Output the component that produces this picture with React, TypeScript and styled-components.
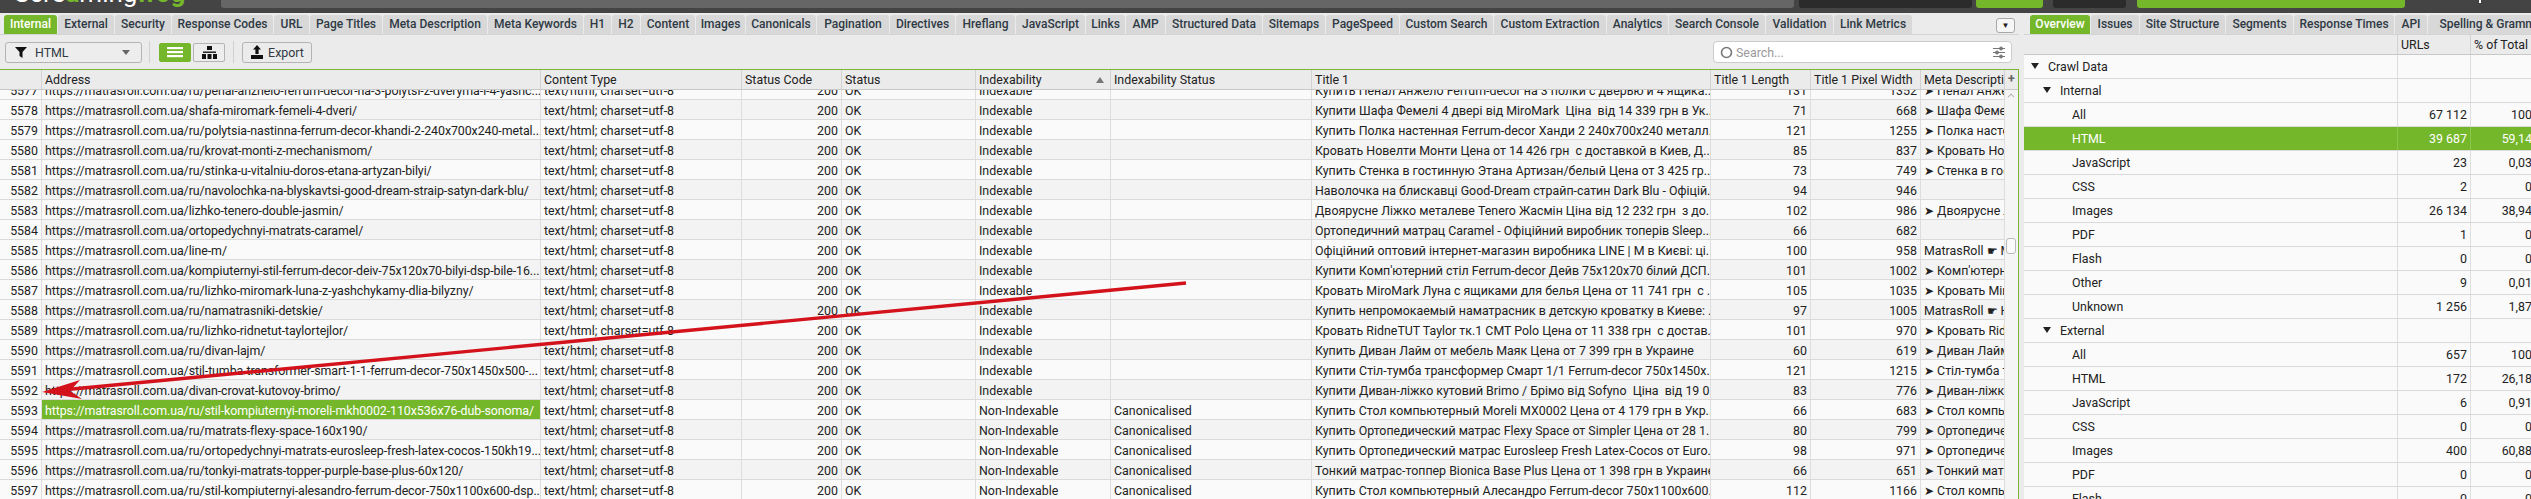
import styled, { createGlobalStyle } from "styled-components";

const GREEN = "#75b72a";
const BASE = "https://matrasroll.com.ua/";

const GlobalStyle = createGlobalStyle`
  html, body {
    margin: 0;
    padding: 0;
    background: #ebebeb;
  }
  * {
    box-sizing: border-box;
  }
`;

const Page = styled.div`
  position: relative;
  width: 2531px;
  height: 499px;
  overflow: hidden;
  font-family: Roboto, "Liberation Sans", sans-serif;
  font-size: 12.4px;
  color: #222;
  background: #ebebeb;
`;

const TopBar = styled.div`
  display: flex;
  height: 13px;
  background: #444;
  overflow: hidden;
`;

const Logo = styled.div`
  width: 221px;
  flex: none;
  padding-left: 14px;
  margin-top: -22px;
  font-size: 26px;
  line-height: 30px;
  font-weight: 400;
  color: #fff;
  white-space: nowrap;
  span {
    color: ${GREEN};
    font-weight: 700;
  }
`;

const Slab = styled.div<{ $w: number; $ml?: number; $color: string }>`
  width: ${({ $w }) => $w}px;
  margin-left: ${({ $ml }) => $ml ?? 0}px;
  height: 8px;
  flex: none;
  border-radius: 0 0 3px 3px;
  background: ${({ $color }) => $color};
`;

const Tick = styled.div`
  width: 2px;
  height: 3px;
  margin-left: 74px;
  background: #fff;
`;

const Main = styled.div`
  display: flex;
  height: 486px;
`;

const LeftPane = styled.div`
  width: 2019px;
  flex: none;
  display: flex;
  flex-direction: column;
`;

const RightPane = styled.div`
  margin-left: 5px;
  width: 507px;
  flex: none;
  display: flex;
  flex-direction: column;
  overflow: hidden;
`;

const TabStrip = styled.div<{ $pl: number }>`
  display: flex;
  align-items: flex-end;
  gap: 1px;
  height: 22px;
  padding-left: ${({ $pl }) => $pl}px;
  border-bottom: 1px solid #d4d4d4;
  white-space: nowrap;
  flex: none;
`;

const Tab = styled.div<{ $w: number; $active?: boolean }>`
  width: ${({ $w }) => $w}px;
  flex: none;
  height: 19px;
  line-height: 19px;
  text-align: center;
  font-size: 12px;
  font-weight: 500;
  border-radius: 3px 3px 0 0;
  overflow: hidden;
  color: ${({ $active }) => ($active ? "#fff" : "#2f3a44")};
  background: ${({ $active }) => ($active ? GREEN : "#d8d8d8")};
`;

const TabMenu = styled.div`
  position: absolute;
  left: 1996px;
  top: 18px;
  width: 19px;
  height: 15px;
  display: flex;
  align-items: center;
  justify-content: center;
  background: #f6f6f6;
  border: 1px solid #a8a8a8;
  border-radius: 3px;
  font-size: 8px;
`;

const Toolbar = styled.div`
  display: flex;
  align-items: center;
  height: 34px;
  padding: 0 7px 0 5px;
  flex: none;
`;

const Select = styled.div`
  display: flex;
  align-items: center;
  width: 137px;
  height: 21px;
  padding: 0 8px;
  gap: 7px;
  border: 1px solid #b4b4b4;
  border-radius: 3px;
  background: #ededed;
  color: #2f3a44;
`;

const Caret = styled.span`
  margin-left: auto;
  margin-right: 3px;
  width: 0;
  height: 0;
  border-left: 4px solid transparent;
  border-right: 4px solid transparent;
  border-top: 5px solid #666;
`;

const Divider = styled.div<{ $ml: number; $mr: number }>`
  width: 1px;
  height: 22px;
  background: #d0d0d0;
  margin: 0 ${({ $mr }) => $mr}px 0 ${({ $ml }) => $ml}px;
`;

const ViewButton = styled.div<{ $active?: boolean; $ml?: number }>`
  display: flex;
  align-items: center;
  justify-content: center;
  width: 32px;
  height: 19px;
  margin-left: ${({ $ml }) => $ml ?? 0}px;
  border-radius: 2px;
  background: ${({ $active }) => ($active ? GREEN : "#ededed")};
  border: 1px solid ${({ $active }) => ($active ? GREEN : "#b4b4b4")};
`;

const ExportButton = styled.div`
  display: flex;
  align-items: center;
  justify-content: center;
  gap: 4px;
  width: 70px;
  height: 21px;
  border: 1px solid #b4b4b4;
  border-radius: 3px;
  color: #2f3a44;
`;

const SearchBox = styled.div`
  margin-left: auto;
  display: flex;
  align-items: center;
  gap: 3px;
  width: 299px;
  height: 22px;
  padding: 0 6px;
  background: #fff;
  border: 1px solid #ccc;
  border-radius: 4px;
  color: #999;
  svg:last-child {
    margin-left: auto;
  }
`;

const TableFrame = styled.div`
  position: relative;
  flex: 1;
  min-height: 0;
  border-top: 1px solid #7ab536;
  border-right: 1px solid #7ab536;
  overflow: hidden;
`;

const HeaderRow = styled.div`
  position: relative;
  z-index: 1;
  display: flex;
  height: 20px;
  background: #ebebeb;
  border-bottom: 1px solid #c8c8c8;
`;

const HeaderCell = styled.div<{ $w: number }>`
  position: relative;
  width: ${({ $w }) => $w}px;
  flex: none;
  height: 19px;
  line-height: 20px;
  padding-left: 3px;
  overflow: hidden;
  white-space: nowrap;
  border-right: 1px solid #d2d2d2;
`;

const SortMark = styled.span`
  position: absolute;
  right: 6px;
  top: 7px;
  width: 0;
  height: 0;
  border-left: 4px solid transparent;
  border-right: 4px solid transparent;
  border-bottom: 6px solid #777;
`;

const AddColumn = styled.div`
  flex: 1;
  text-align: center;
  line-height: 17px;
  font-weight: 700;
  color: #666;
`;

const RowsClip = styled.div`
  height: 410px;
  overflow: hidden;
`;

const RowsScroll = styled.div`
  margin-top: -10px;
`;

const Row = styled.div<{ $even: boolean }>`
  display: flex;
  height: 20px;
  background: ${({ $even }) => ($even ? "#f3f3f3" : "#fafafa")};
  border-bottom: 1px solid #dadada;
`;

const Cell = styled.div<{ $w: number; $right?: boolean; $selected?: boolean; $plain?: boolean }>`
  width: ${({ $w }) => $w}px;
  flex: none;
  height: 19px;
  line-height: 21px;
  padding: 0 3px;
  overflow: hidden;
  white-space: pre;
  text-align: ${({ $right }) => ($right ? "right" : "left")};
  border-right: 1px solid #dedede;
  background: ${({ $selected, $plain }) =>
    $selected ? GREEN : $plain ? "#fafafa" : "transparent"};
  color: ${({ $selected }) => ($selected ? "#fff" : "inherit")};
`;

const AddressCell = styled(Cell)`
  letter-spacing: -0.08px;
`;

const ScrollTrack = styled.div`
  position: absolute;
  z-index: 2;
  left: 2005px;
  right: 0;
  top: 20px;
  bottom: 0;
  background: #f5f5f5;
`;

const ScrollUp = styled.div`
  position: absolute;
  left: 3px;
  top: 4px;
  width: 6px;
  height: 6px;
  border-left: 1px solid #aaa;
  border-top: 1px solid #aaa;
  transform: rotate(45deg) scale(0.8);
`;

const ScrollThumb = styled.div`
  position: absolute;
  left: 1px;
  top: 148px;
  width: 10px;
  height: 16px;
  background: #fbfbfb;
  border: 1px solid #bbb;
  border-radius: 3px;
`;

const TreeHeader = styled.div`
  display: flex;
  flex: none;
  height: 20px;
  background: #ebebeb;
  border-bottom: 1px solid #c8c8c8;
`;

const TreeHeadCell = styled.div<{ $w: number }>`
  width: ${({ $w }) => $w}px;
  flex: none;
  line-height: 20px;
  padding-left: 3px;
  white-space: nowrap;
  border-left: ${({ $w }) => ($w < 200 ? "1px solid #d2d2d2" : "none")};
`;

const TreeRow = styled.div<{ $selected?: boolean }>`
  display: flex;
  flex: none;
  height: 24px;
  background: ${({ $selected }) => ($selected ? GREEN : "#fafafa")};
  color: ${({ $selected }) => ($selected ? "#fff" : "inherit")};
  border-bottom: 1px solid #dadada;
`;

const TreeLabel = styled.div<{ $indent: number }>`
  display: flex;
  align-items: center;
  width: 373px;
  flex: none;
  padding-left: ${({ $indent }) => $indent}px;
  gap: 9px;
`;

const TreeArrow = styled.span`
  width: 0;
  height: 0;
  border-left: 4px solid transparent;
  border-right: 4px solid transparent;
  border-top: 6px solid #222;
  margin-bottom: 2px;
`;

const TreeValue = styled.div<{ $w: number; $selected?: boolean }>`
  width: ${({ $w }) => $w}px;
  flex: none;
  padding-right: 3px;
  line-height: 24px;
  text-align: right;
  border-left: 1px solid ${({ $selected }) => ($selected ? "#8cc54a" : "#dedede")};
`;

const RedArrow = styled.svg`
  position: absolute;
  left: 0;
  top: 0;
  pointer-events: none;
  z-index: 5;
`;

const mainTabs: [string, number][] = [
  ["Internal", 53], ["External", 56], ["Security", 56], ["Response Codes", 101], ["URL", 35],
  ["Page Titles", 72], ["Meta Description", 104], ["Meta Keywords", 95], ["H1", 27], ["H2", 28],
  ["Content", 54], ["Images", 49], ["Canonicals", 70], ["Pagination", 72], ["Directives", 65],
  ["Hreflang", 59], ["JavaScript", 69], ["Links", 39], ["AMP", 39], ["Structured Data", 96],
  ["Sitemaps", 62], ["PageSpeed", 73], ["Custom Search", 93], ["Custom Extraction", 112],
  ["Analytics", 61], ["Search Console", 96], ["Validation", 67], ["Link Metrics", 78],
];

const sideTabs: [string, number][] = [
  ["Overview", 60], ["Issues", 48], ["Site Structure", 85], ["Segments", 67],
  ["Response Times", 100], ["API", 32], ["Spelling & Grammar", 130],
];

const COLS = [42, 499, 201, 100, 134, 135, 201, 399, 100, 110, 84];
const HEADS = ["", "Address", "Content Type", "Status Code", "Status", "Indexability", "Indexability Status", "Title 1", "Title 1 Length", "Title 1 Pixel Width", "Meta Description 1"];

const D = "➤ ";
const T = "MatrasRoll ☛ ";
type Item = [string, string, number, number, string];

const items: Item[] = [
  ["ru/penal-anzhelo-ferrum-decor-na-3-polytsi-z-dveryma-i-4-yashc...", "Купить Пенал Анжело Ferrum-decor на 3 полки с дверью и 4 ящика...", 131, 1352, D + "Пенал Анжело"],
  ["shafa-miromark-femeli-4-dveri/", "Купити Шафа Фемелі 4 двері від MiroMark  Ціна  від 14 339 грн в Ук...", 71, 668, D + "Шафа Фемелі"],
  ["ru/polytsia-nastinna-ferrum-decor-khandi-2-240x700x240-metal...", "Купить Полка настенная Ferrum-decor Ханди 2 240x700x240 металл...", 121, 1255, D + "Полка настенная"],
  ["ru/krovat-monti-z-mechanismom/", "Кровать Новелти Монти Цена от 14 426 грн  с доставкой в Киев, Д...", 85, 837, D + "Кровать Новелти"],
  ["ru/stinka-u-vitalniu-doros-etana-artyzan-bilyi/", "Купить Стенка в гостинную Этана Артизан/белый Цена от 3 425 гр...", 73, 749, D + "Стенка в гостинную"],
  ["ru/navolochka-na-blyskavtsi-good-dream-straip-satyn-dark-blu/", "Наволочка на блискавці Good-Dream страйп-сатин Dark Blu - Офіцій...", 94, 946, ""],
  ["lizhko-tenero-double-jasmin/", "Двоярусне Ліжко металеве Tenero Жасмін Ціна від 12 232 грн  з до...", 102, 986, D + "Двоярусне Ліжко"],
  ["ortopedychnyi-matrats-caramel/", "Ортопедичний матрац Caramel - Офіційний виробник топерів Sleep...", 66, 682, ""],
  ["line-m/", "Офіційний оптовий інтернет-магазин виробника LINE | M в Києві: ці...", 100, 958, T + "Матраси"],
  ["kompiuternyi-stil-ferrum-decor-deiv-75x120x70-bilyi-dsp-bile-16...", "Купити Комп'ютерний стіл Ferrum-decor Дейв 75x120x70 білий ДСП...", 101, 1002, D + "Комп'ютерний"],
  ["ru/lizhko-miromark-luna-z-yashchykamy-dlia-bilyzny/", "Кровать MiroMark Луна с ящиками для белья Цена от 11 741 грн  с ...", 105, 1035, D + "Кровать MiroMark"],
  ["ru/namatrasniki-detskie/", "Купить непромокаемый наматрасник в детскую кроватку в Киеве: ...", 97, 1005, T + "Наматрасник"],
  ["ru/lizhko-ridnetut-taylortejlor/", "Кровать RidneTUT Taylor тк.1 CMT Polo Цена от 11 338 грн  с достав...", 101, 970, D + "Кровать RidneTUT"],
  ["ru/divan-lajm/", "Купить Диван Лайм от мебель Маяк Цена от 7 399 грн в Украине", 60, 619, D + "Диван Лайм"],
  ["stil-tumba-transformer-smart-1-1-ferrum-decor-750x1450x500-...", "Купити Стіл-тумба трансформер Смарт 1/1 Ferrum-decor 750x1450x...", 121, 1215, D + "Стіл-тумба трансформер"],
  ["divan-crovat-kutovoy-brimo/", "Купити Диван-ліжко кутовий Brimo / Брімо від Sofyno  Ціна  від 19 0...", 83, 776, D + "Диван-ліжко кутовий"],
  ["ru/stil-kompiuternyi-moreli-mkh0002-110x536x76-dub-sonoma/", "Купить Стол компьютерный Moreli MX0002 Цена от 4 179 грн в Укр...", 66, 683, D + "Стол компьютерный"],
  ["ru/matrats-flexy-space-160x190/", "Купить Ортопедический матрас Flexy Space от Simpler Цена от 28 1...", 80, 799, D + "Ортопедический"],
  ["ru/ortopedychnyi-matrats-eurosleep-fresh-latex-cocos-150kh19...", "Купить Ортопедический матрас Eurosleep Fresh Latex-Cocos от Euro...", 98, 971, D + "Ортопедический"],
  ["ru/tonkyi-matrats-topper-purple-base-plus-60x120/", "Тонкий матрас-топпер Bionica Base Plus Цена от 1 398 грн в Украине", 66, 651, D + "Тонкий матрас"],
  ["ru/stil-kompiuternyi-alesandro-ferrum-decor-750x1100x600-dsp...", "Купить Стол компьютерный Алесандро Ferrum-decor 750x1100x600...", 112, 1166, D + "Стол компьютерный"],
];

type TreeItem = { label: string; indent: number; arrow?: boolean; urls?: string; pct?: string; selected?: boolean };

const tree: TreeItem[] = [
  { label: "Crawl Data", indent: 7, arrow: true },
  { label: "Internal", indent: 19, arrow: true },
  { label: "All", indent: 48, urls: "67 112", pct: "100%" },
  { label: "HTML", indent: 48, urls: "39 687", pct: "59,14%", selected: true },
  { label: "JavaScript", indent: 48, urls: "23", pct: "0,03%" },
  { label: "CSS", indent: 48, urls: "2", pct: "0%" },
  { label: "Images", indent: 48, urls: "26 134", pct: "38,94%" },
  { label: "PDF", indent: 48, urls: "1", pct: "0%" },
  { label: "Flash", indent: 48, urls: "0", pct: "0%" },
  { label: "Other", indent: 48, urls: "9", pct: "0,01%" },
  { label: "Unknown", indent: 48, urls: "1 256", pct: "1,87%" },
  { label: "External", indent: 19, arrow: true },
  { label: "All", indent: 48, urls: "657", pct: "100%" },
  { label: "HTML", indent: 48, urls: "172", pct: "26,18%" },
  { label: "JavaScript", indent: 48, urls: "6", pct: "0,91%" },
  { label: "CSS", indent: 48, urls: "0", pct: "0%" },
  { label: "Images", indent: 48, urls: "400", pct: "60,88%" },
  { label: "PDF", indent: 48, urls: "0", pct: "0%" },
  { label: "Flash", indent: 48, urls: "0", pct: "0%" },
];

const FilterIcon = () => (
  <svg width="14" height="14" viewBox="0 0 14 14">
    <path d="M1 2h12L8.5 7v6L5.5 11V7z" fill="#111" />
  </svg>
);

const ListIcon = () => (
  <svg width="16" height="13" viewBox="0 0 16 13" fill="#fff">
    <rect x="0" y="1" width="16" height="2.2" />
    <rect x="0" y="5" width="16" height="2.2" />
    <rect x="0" y="9" width="16" height="2.2" />
  </svg>
);

const TreeIcon = () => (
  <svg width="15" height="13" viewBox="0 0 15 13" fill="#111">
    <rect x="5" y="0" width="5" height="4" />
    <rect x="1" y="5.5" width="13" height="1.4" />
    <rect x="0" y="8" width="4" height="5" />
    <rect x="5.5" y="8" width="4" height="5" />
    <rect x="11" y="8" width="4" height="5" />
  </svg>
);

const ExportIcon = () => (
  <svg width="14" height="14" viewBox="0 0 14 14" fill="#111">
    <path d="M7 0l4 4.5H8.6V9H5.4V4.5H3z" />
    <rect x="1" y="10" width="12" height="4" />
  </svg>
);

const SlidersIcon = () => (
  <svg width="12" height="13" viewBox="0 0 12 13" stroke="#777" fill="#777">
    <path d="M0 2.5h12M0 6.5h12M0 10.5h12" strokeWidth="1" />
    <circle cx="8" cy="2.5" r="1.5" />
    <circle cx="4" cy="6.5" r="1.5" />
    <circle cx="8" cy="10.5" r="1.5" />
  </svg>
);

const SearchRing = () => (
  <svg width="13" height="13" viewBox="0 0 13 13" fill="none" stroke="#777" strokeWidth="1.6">
    <circle cx="6.5" cy="6.5" r="5" />
  </svg>
);

export default function App() {
  return (
    <Page>
      <GlobalStyle />
      <TopBar>
        <Logo>
          Scre<span>a</span>ming<span>frog</span>
        </Logo>
        <Slab $w={1573} $color="#666" />
        <Slab $w={173} $ml={5} $color="#2b2b2b" />
        <Slab $w={67} $ml={4} $color={GREEN} />
        <Slab $w={73} $ml={10} $color="#2b2b2b" />
        <Slab $w={268} $ml={11} $color={GREEN} />
        <Tick />
      </TopBar>
      <Main>
        <LeftPane>
          <TabStrip $pl={4}>
            {mainTabs.map(([name, w], i) => (
              <Tab key={name} $w={w} $active={i === 0}>
                {name}
              </Tab>
            ))}
          </TabStrip>
          <TabMenu>▼</TabMenu>
          <Toolbar>
            <Select>
              <FilterIcon />
              HTML
              <Caret />
            </Select>
            <Divider $ml={7} $mr={9} />
            <ViewButton $active>
              <ListIcon />
            </ViewButton>
            <ViewButton $ml={2}>
              <TreeIcon />
            </ViewButton>
            <Divider $ml={8} $mr={8} />
            <ExportButton>
              <ExportIcon />
              Export
            </ExportButton>
            <SearchBox>
              <SearchRing />
              Search...
              <SlidersIcon />
            </SearchBox>
          </Toolbar>
          <TableFrame>
            <HeaderRow>
              {HEADS.map((h, i) => (
                <HeaderCell key={i} $w={COLS[i]}>
                  {h}
                  {h === "Indexability" && <SortMark />}
                </HeaderCell>
              ))}
              <AddColumn>+</AddColumn>
            </HeaderRow>
            <RowsClip>
              <RowsScroll>
                {items.map(([path, title, len, px, meta], i) => {
                  const num = 5577 + i;
                  const nonIndexable = num >= 5593;
                  return (
                    <Row key={num} $even={num % 2 === 0}>
                      <Cell $w={COLS[0]} $right $plain>
                        {num}
                      </Cell>
                      <AddressCell $w={COLS[1]} $selected={num === 5593}>
                        {BASE + path}
                      </AddressCell>
                      <Cell $w={COLS[2]}>text/html; charset=utf-8</Cell>
                      <Cell $w={COLS[3]} $right>
                        200
                      </Cell>
                      <Cell $w={COLS[4]}>OK</Cell>
                      <Cell $w={COLS[5]}>{nonIndexable ? "Non-Indexable" : "Indexable"}</Cell>
                      <Cell $w={COLS[6]}>{nonIndexable ? "Canonicalised" : ""}</Cell>
                      <Cell $w={COLS[7]}>{title}</Cell>
                      <Cell $w={COLS[8]} $right>
                        {len}
                      </Cell>
                      <Cell $w={COLS[9]} $right>
                        {px}
                      </Cell>
                      <Cell $w={COLS[10]}>{meta}</Cell>
                    </Row>
                  );
                })}
              </RowsScroll>
            </RowsClip>
            <ScrollTrack>
              <ScrollUp />
              <ScrollThumb />
            </ScrollTrack>
          </TableFrame>
        </LeftPane>
        <RightPane>
          <TabStrip $pl={6}>
            {sideTabs.map(([name, w], i) => (
              <Tab key={name} $w={w} $active={i === 0}>
                {name}
              </Tab>
            ))}
          </TabStrip>
          <TreeHeader>
            <TreeHeadCell $w={373} />
            <TreeHeadCell $w={73}>URLs</TreeHeadCell>
            <TreeHeadCell $w={74}>% of Total</TreeHeadCell>
          </TreeHeader>
          {tree.map((t, i) => (
            <TreeRow key={i} $selected={t.selected}>
              <TreeLabel $indent={t.indent}>
                {t.arrow && <TreeArrow />}
                {t.label}
              </TreeLabel>
              <TreeValue $w={73} $selected={t.selected}>
                {t.urls}
              </TreeValue>
              <TreeValue $w={74} $selected={t.selected}>
                {t.pct}
              </TreeValue>
            </TreeRow>
          ))}
        </RightPane>
      </Main>
      <RedArrow width="2531" height="499" viewBox="0 0 2531 499">
        <path d="M1186 283L62 390" stroke="#d3121c" strokeWidth="3.4" fill="none" />
        <path d="M42 392L80 380L70 391L82 399z" fill="#d3121c" />
      </RedArrow>
    </Page>
  );
}
